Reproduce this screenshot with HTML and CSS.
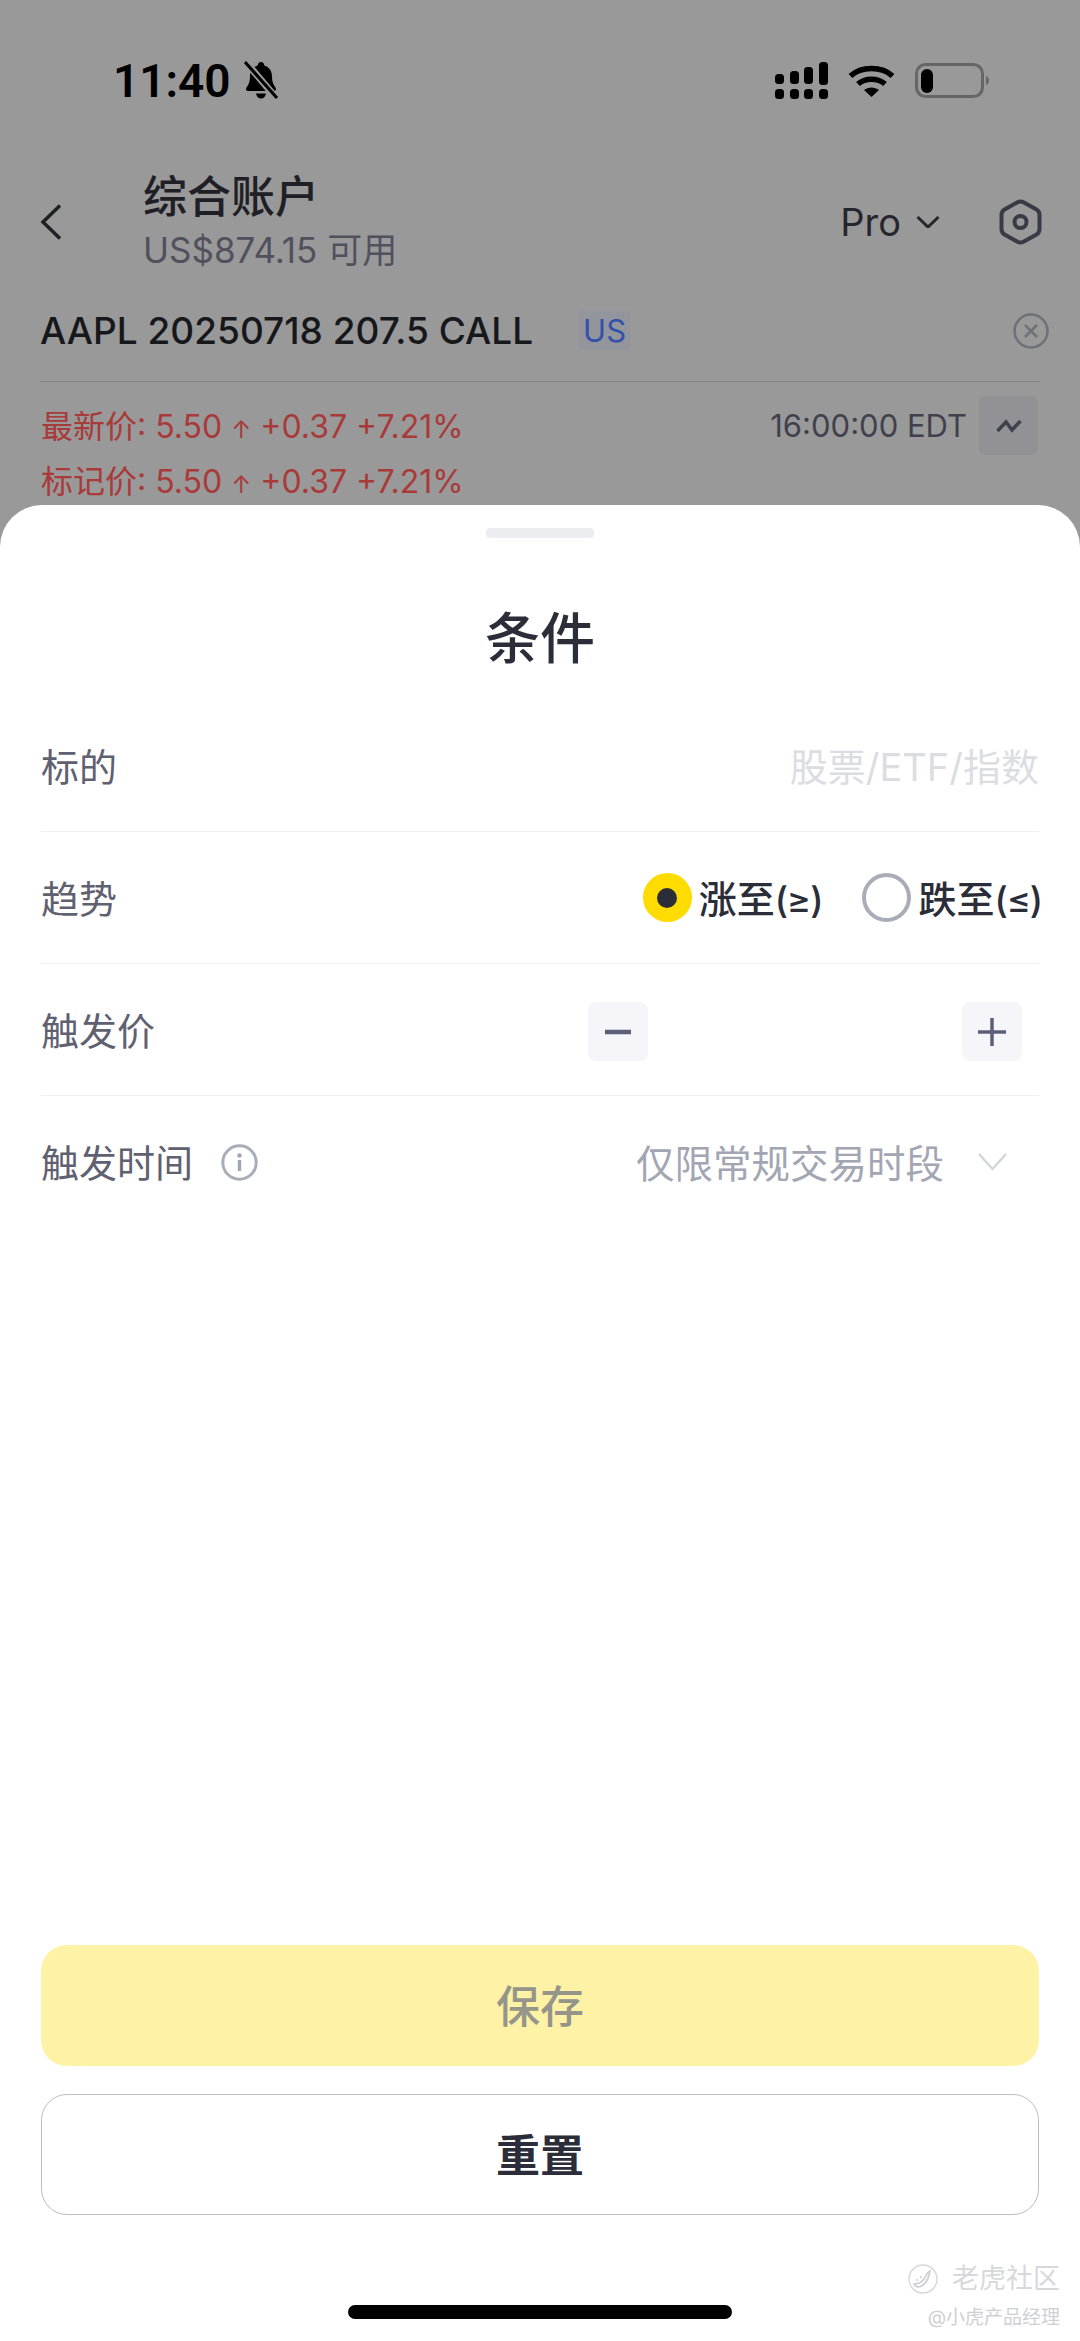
FILE: index.html
```html
<!DOCTYPE html>
<html lang="zh-CN">
<head>
  <meta charset="UTF-8">
  <meta name="viewport" content="width=device-width, initial-scale=1.0">
  <title>条件</title>
  <link rel="stylesheet" href="styles.css">
</head>
<body>
  <div class="screen">

    <div class="backdrop">
      <div class="status-bar">
        <div class="status-left">
          <span class="clock">11:40</span>
          <svg class="bell" width="38" height="38" viewBox="0 0 38 38">
            <path d="M19 1c2 0 3 1.500 3.300 3.500 5 1.500 7.700 5.500 7.700 11 0 5 1.200 8 3.500 11 1 1.500.3 3.500-1.800 3.500H6.300c-2.100 0-2.800-2-1.800-3.500 2.300-3 3.500-6 3.500-11 0-5.500 2.700-9.500 7.700-11C16 2.500 17 1 19 1z" fill="#000"/>
            <path d="M14 32.500h10c-.5 3-2.500 5-5 5s-4.500-2-5-5z" fill="#000"/>
            <path d="M3 0l32 38" stroke="#999" stroke-width="7"/>
            <path d="M3 1l32 36" stroke="#000" stroke-width="3"/>
          </svg>
        </div>
        <div class="status-right">
          <svg width="53" height="37" viewBox="0 0 53 37" fill="#000">
            <rect x="0" y="12" width="9" height="10" rx="3.500"/>
            <rect x="15" y="9" width="9" height="13" rx="3.500"/>
            <rect x="29" y="5" width="9" height="17" rx="3.500"/>
            <rect x="44" y="0" width="9" height="23" rx="3.500"/>
            <rect x="0" y="27" width="9" height="10" rx="3.500"/>
            <rect x="15" y="27" width="9" height="10" rx="3.500"/>
            <rect x="29" y="27" width="9" height="10" rx="3.500"/>
            <rect x="44" y="27" width="9" height="10" rx="3.500"/>
          </svg>
          <svg width="47" height="34" viewBox="0 0 47 34">
            <path d="M2.500 13C13 3 34 3 44.500 13M10 21c7-6.500 20-6.500 27 0" fill="none" stroke="#000" stroke-width="5.500"/>
            <path d="M16 27c4.500-3.500 10.500-3.500 15 0l-7.500 7z" fill="#000"/>
          </svg>
          <svg width="75" height="35" viewBox="0 0 75 35">
            <rect x="1.500" y="1.500" width="66" height="32" rx="9" fill="none" stroke="#666" stroke-width="3"/>
            <rect x="6" y="6" width="12" height="24" rx="6" fill="#000"/>
            <path d="M71 13c2 1 3 2.500 3 4.500s-1 3.500-3 4.500z" fill="#666"/>
          </svg>
        </div>
      </div>

      <div class="account-bar">
        <svg class="back" width="22" height="36" viewBox="0 0 22 36">
          <path d="M20 1.500L3 18l17 16.500" fill="none" stroke="#1f2026" stroke-width="3.500"/>
        </svg>
        <div class="account-info">
          <div class="account-name">综合账户</div>
          <div class="account-cash">US$874.15 可用</div>
        </div>
        <div class="mode">Pro</div>
        <svg class="mode-arrow" width="24" height="12" viewBox="0 0 24 12">
          <path d="M1.500 1l10.500 10L22.500 1" fill="none" stroke="#26272e" stroke-width="3"/>
        </svg>
        <svg class="settings" width="43" height="46" viewBox="0 0 43 46">
          <path d="M18.500 3.300a6 6 0 0 1 6 0l13 7.200a6 6 0 0 1 3 5.200v14.600a6 6 0 0 1-3 5.200l-13 7.200a6 6 0 0 1-6 0l-13-7.200a6 6 0 0 1-3-5.200V15.700a6 6 0 0 1 3-5.200z" fill="none" stroke="#393a46" stroke-width="4"/>
          <circle cx="21.500" cy="23" r="6" fill="none" stroke="#393a46" stroke-width="4"/>
        </svg>
      </div>

      <div class="symbol-bar">
        <span class="symbol">AAPL 20250718 207.5 CALL</span>
        <span class="market">US</span>
        <svg class="clear" width="36" height="36" viewBox="0 0 36 36">
          <circle cx="18" cy="18" r="16.500" fill="none" stroke="#6f7078" stroke-width="2.500"/>
          <path d="M12 12l12 12M24 12L12 24" stroke="#6f7078" stroke-width="2.500"/>
        </svg>
      </div>

      <div class="quote">
        <div class="quote-row quote-row-first">
          <span class="quote-price">最新价: 5.50 <span class="up">↑</span> +0.37 +7.21%</span>
          <span class="quote-time">16:00:00 EDT</span>
          <span class="chart-btn">
            <svg width="26" height="14" viewBox="0 0 26 14">
              <path d="M1.500 12L10 3l6 8 8.500-9" fill="none" stroke="#40414c" stroke-width="3.500"/>
            </svg>
          </span>
        </div>
        <div class="quote-row">
          <span class="quote-price">标记价: 5.50 <span class="up">↑</span> +0.37 +7.21%</span>
        </div>
      </div>
    </div>

    <div class="sheet">
      <div class="handle"></div>
      <h1 class="sheet-title">条件</h1>

      <div class="form-row">
        <span class="form-label">标的</span>
        <span class="placeholder">股票/ETF/指数</span>
      </div>

      <div class="form-row">
        <span class="form-label">趋势</span>
        <div class="radios">
          <span class="radio radio-on"></span>
          <span class="radio-text">涨至<span class="radio-sign">(≥)</span></span>
          <span class="radio radio-off"></span>
          <span class="radio-text">跌至<span class="radio-sign">(≤)</span></span>
        </div>
      </div>

      <div class="form-row">
        <span class="form-label">触发价</span>
        <div class="stepper">
          <span class="step-btn">
            <svg width="26" height="26" viewBox="0 0 26 26"><path d="M0 13h26" stroke="#5c5f78" stroke-width="4.500"/></svg>
          </span>
          <span class="step-btn">
            <svg width="28" height="28" viewBox="0 0 28 28"><path d="M0 14h28M14 0v28" stroke="#5c5f78" stroke-width="3.500"/></svg>
          </span>
        </div>
      </div>

      <div class="form-row form-row-last">
        <span class="form-label">触发时间</span>
        <svg class="info" width="37" height="37" viewBox="0 0 37 37">
          <circle cx="18.500" cy="18.500" r="16.700" fill="none" stroke="#a9adb8" stroke-width="3"/>
          <circle cx="18.500" cy="11.500" r="2.200" fill="#a2a6b3"/>
          <rect x="16.800" y="16" width="3.400" height="11" fill="#a2a6b3"/>
        </svg>
        <span class="select-value">仅限常规交易时段</span>
        <svg class="select-arrow" width="29" height="18" viewBox="0 0 29 18">
          <path d="M1 1l13.500 15L28 1" fill="none" stroke="#d3d5dc" stroke-width="2.500"/>
        </svg>
      </div>

      <div class="actions">
        <button class="btn btn-save" type="button">保存</button>
        <button class="btn btn-reset" type="button">重置</button>
      </div>
      <div class="home-bar"></div>
    </div>

    <div class="watermark">
      <div class="watermark-main">
        <svg width="30" height="30" viewBox="0 0 30 30">
          <ellipse cx="15" cy="15" rx="14" ry="14" fill="none" stroke="#d8d8db" stroke-width="1.500"/>
          <path d="M6 20c1 3 5 4 9 1s6-8 7-14c-3 1-4 5-6 8s-6 5-10 5z" fill="none" stroke="#d0d0d4" stroke-width="1.800"/>
          <circle cx="9" cy="16" r="1.100" fill="#d0d0d4"/>
          <circle cx="13" cy="13" r="1.100" fill="#d0d0d4"/>
        </svg>
        <span>老虎社区</span>
      </div>
      <div class="watermark-user">@小虎产品经理</div>
    </div>

  </div>
</body>
</html>
```

FILE: styles.css
```css
* {
  box-sizing: border-box;
}

body {
  margin: 0;
  padding: 0;
  background-color: #fff;
  font-family: Inter, "Noto Sans CJK SC", sans-serif;
  color: #2b2d38;
}

.screen {
  position: relative;
  width: 1080px;
  height: 2341px;
  background-color: #999;
  display: flex;
  flex-direction: column;
  overflow: hidden;
}

/* dimmed page behind the sheet */
.backdrop {
  height: 505px;
  flex-shrink: 0;
  overflow: hidden;
}

.status-bar {
  height: 160px;
  padding: 0 90px 0 113px;
  display: flex;
  align-items: center;
  justify-content: space-between;
}

.status-left {
  display: flex;
  align-items: center;
  gap: 11px;
}

.clock {
  padding-top: 2px;
  font-family: Roboto, sans-serif;
  font-size: 46px;
  font-weight: 600;
  color: #000;
}

.status-right {
  display: flex;
  align-items: center;
  gap: 20px;
}

.account-bar {
  height: 124px;
  padding: 0 38px 0 40px;
  display: flex;
  align-items: center;
}

.account-info {
  flex: 1;
  margin-left: 81px;
}

.account-name {
  font-size: 44px;
  line-height: 56px;
  font-weight: 500;
  color: #1f2026;
}

.account-cash {
  font-size: 35px;
  line-height: 50px;
  color: #50515c;
}

.mode {
  font-size: 38px;
  color: #26272e;
}

.mode-arrow {
  margin-left: 15px;
}

.settings {
  margin-left: 59px;
}

.symbol-bar {
  height: 98px;
  margin: 0 40px;
  padding-bottom: 4px;
  border-bottom: 1px solid #878787;
  display: flex;
  align-items: center;
}

.symbol {
  font-size: 37px;
  font-weight: 500;
  color: #17181c;
}

.market {
  margin-left: 46px;
  padding: 0 4px;
  height: 39px;
  line-height: 39px;
  background-color: #93959c;
  font-size: 31px;
  color: #3550a8;
}

.clear {
  margin-left: auto;
  margin-right: -9px;
}

.quote {
  margin: 14px 42px 0 41px;
}

.quote-row {
  height: 50px;
  display: flex;
  align-items: center;
}

.quote-row-first {
  height: 59px;
}

.quote-price {
  flex: 1;
  padding-bottom: 3px;
  font-size: 32px;
  color: #a83a3a;
}

.up {
  font-size: 24px;
}

.quote-time {
  font-size: 31px;
  color: #40414c;
}

.chart-btn {
  width: 59px;
  height: 59px;
  margin-left: 12px;
  border-radius: 6px;
  background-color: #919196;
  display: flex;
  align-items: center;
  justify-content: center;
}

/* bottom sheet */
.sheet {
  flex: 1;
  padding: 23px 41px 0;
  background-color: #fff;
  border-radius: 42px 42px 0 0;
  display: flex;
  flex-direction: column;
}

.handle {
  width: 108px;
  height: 10px;
  margin: 0 auto;
  border-radius: 4px;
  background-color: #ebedf0;
}

.sheet-title {
  margin: 64px 0 26px;
  font-size: 55px;
  line-height: 72px;
  font-weight: 500;
  text-align: center;
}

.form-row {
  height: 132px;
  border-bottom: 1px solid #eeeff2;
  display: flex;
  align-items: center;
  justify-content: space-between;
}

.form-row-last {
  border-bottom: none;
}

.form-label {
  padding-bottom: 3px;
  font-size: 38px;
  color: #5f6170;
}

.placeholder {
  padding-bottom: 3px;
  font-size: 38px;
  color: #dcdde3;
}

.radios {
  margin-right: -3px;
  display: flex;
  align-items: center;
}

.radio {
  width: 49px;
  height: 49px;
  border-radius: 50%;
}

.radio-on {
  margin-right: 7px;
  background-color: #ffdc00;
  display: flex;
  align-items: center;
  justify-content: center;
}

.radio-on::after {
  content: "";
  width: 20px;
  height: 20px;
  border-radius: 50%;
  background-color: #2b2d38;
}

.radio-off {
  margin-right: 7px;
  border: 4px solid #a9adb8;
}

.radio-text {
  padding-bottom: 3px;
  font-size: 38px;
  font-weight: 500;
  color: #2b2d38;
}

.radio-sign {
  font-size: 36px;
  letter-spacing: -1px;
}

.radio-text + .radio {
  margin-left: 40px;
}

.stepper {
  width: 434px;
  margin-top: 4px;
  margin-right: 17px;
  display: flex;
  justify-content: space-between;
}

.step-btn {
  width: 60px;
  height: 59px;
  border-radius: 8px;
  background-color: #f5f5fa;
  display: flex;
  align-items: center;
  justify-content: center;
}

.info {
  margin-left: 28px;
}

.select-value {
  margin-left: auto;
  padding-bottom: 3px;
  font-size: 38.5px;
  color: #a2a6b3;
}

.select-arrow {
  margin: 0 32px 0 34px;
}

.actions {
  margin-top: auto;
  display: flex;
  flex-direction: column;
  gap: 28px;
}

.btn {
  width: 100%;
  height: 121px;
  padding-bottom: 5px;
  border-radius: 26px;
  font-family: inherit;
  font-size: 44px;
  font-weight: 500;
}

.btn-save {
  border: none;
  background-color: #fdf2a5;
  color: #96958a;
}

.btn-reset {
  border: 1px solid #bcbec5;
  background-color: #fff;
  font-weight: 700;
  color: #2b2d38;
}

.home-bar {
  width: 384px;
  height: 14px;
  margin: 90px auto 22px;
  border-radius: 7px;
  background-color: #000;
}

.watermark {
  position: absolute;
  right: 20px;
  top: 2262px;
  text-align: right;
  color: #d8d8db;
}

.watermark-main {
  display: flex;
  align-items: center;
  justify-content: flex-end;
  gap: 14px;
  font-size: 27px;
  line-height: 34px;
}

.watermark-user {
  margin-top: 10px;
  font-size: 19px;
  line-height: 24px;
  color: #cfcfd3;
}
```
